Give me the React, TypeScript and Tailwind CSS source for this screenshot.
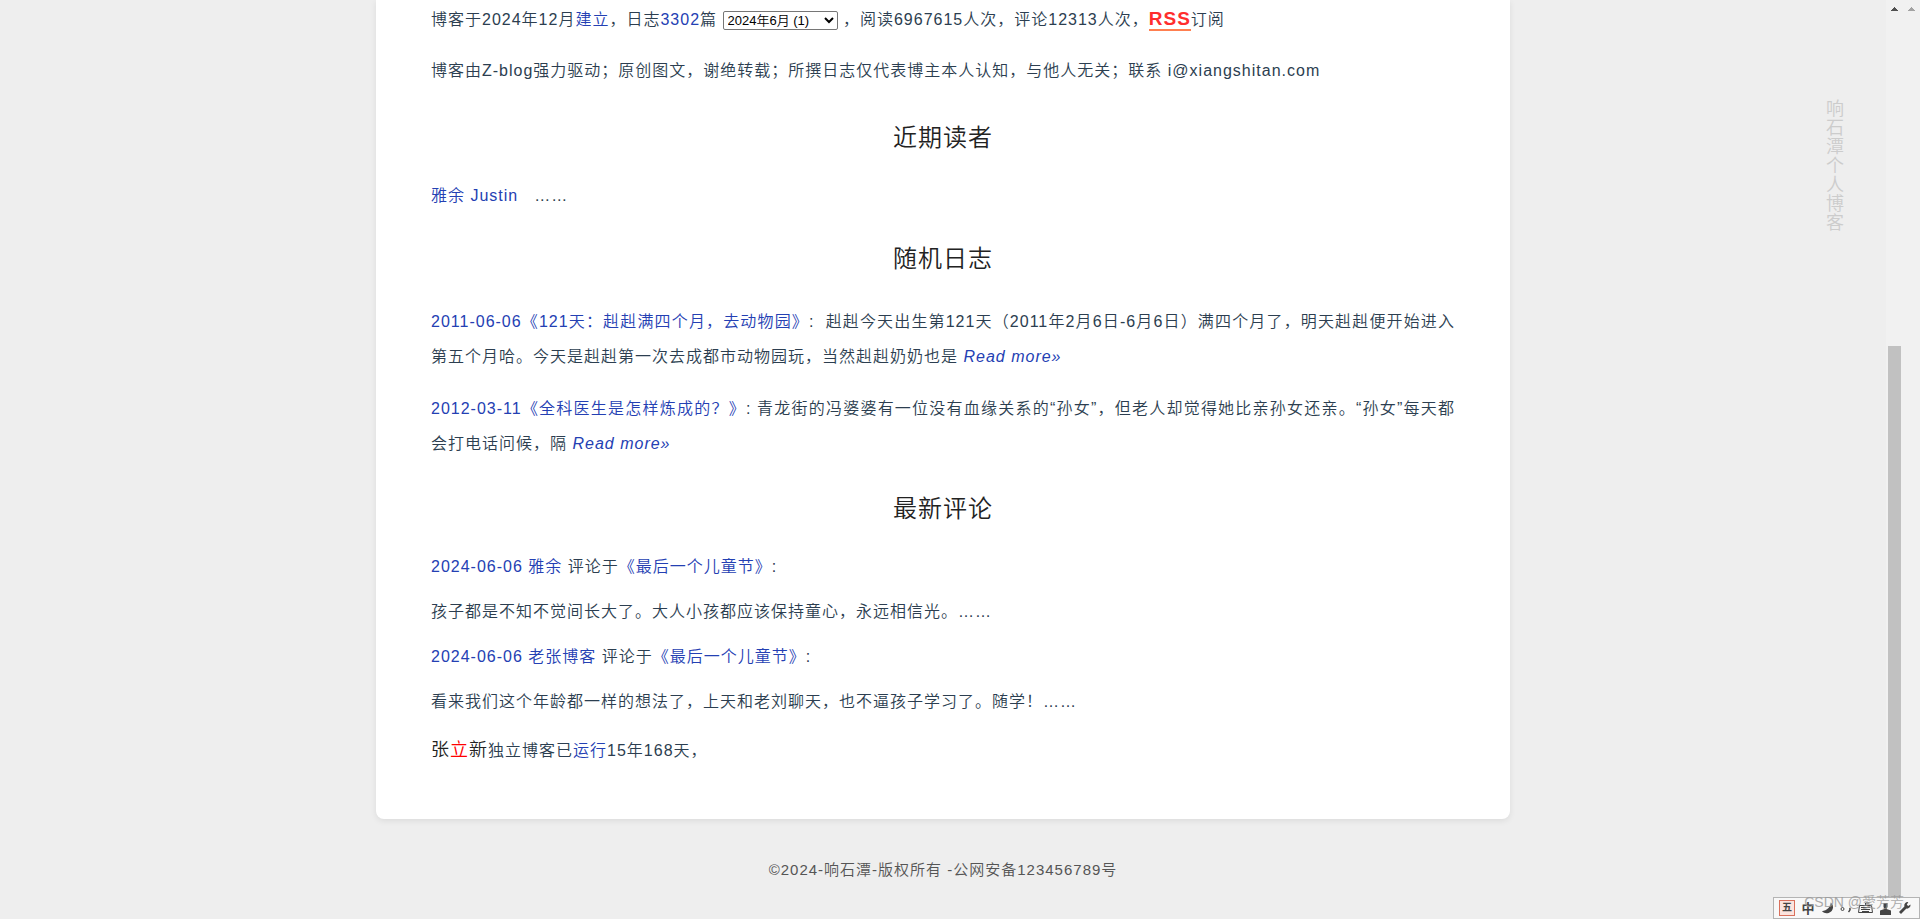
import type { ReactNode } from 'react';

interface Post {
  title: string;
  sep: string;
  excerpt: string;
}

interface Comment {
  date: string;
  author: string;
  article: string;
  text: string;
}

const POSTS: Post[] = [
  {
    title: '2011-06-06《121天：赳赳满四个月，去动物园》',
    sep: ':\u00a0 ',
    excerpt:
      '赳赳今天出生第121天（2011年2月6日-6月6日）满四个月了，明天赳赳便开始进入第五个月哈。今天是赳赳第一次去成都市动物园玩，当然赳赳奶奶也是',
  },
  {
    title: '2012-03-11《全科医生是怎样炼成的？》',
    sep: ': ',
    excerpt:
      '青龙街的冯婆婆有一位没有血缘关系的“孙女”，但老人却觉得她比亲孙女还亲。“孙女”每天都会打电话问候，隔',
  },
];

const COMMENTS: Comment[] = [
  {
    date: '2024-06-06',
    author: '雅余',
    article: '《最后一个儿童节》',
    text: '孩子都是不知不觉间长大了。大人小孩都应该保持童心，永远相信光。……',
  },
  {
    date: '2024-06-06',
    author: '老张博客',
    article: '《最后一个儿童节》',
    text: '看来我们这个年龄都一样的想法了，上天和老刘聊天，也不逼孩子学习了。随学！……',
  },
];

function Link({ children }: { children: ReactNode }) {
  return (
    <a href="#" className="text-[#2440b3]">
      {children}
    </a>
  );
}

function Heading({ children }: { children: ReactNode }) {
  return <h2 className="mt-7 mb-[23px] text-center text-2xl leading-[35px] font-[350] text-[#222]">{children}</h2>;
}

// 滚动条：外层页面不可滚动，箭头为浅色，没有滑块
function ScrollBar({ active }: { active: boolean }) {
  return (
    <div className="flex w-[17px] flex-col items-center bg-[#f1f1f1]">
      <svg width="7" height="4" viewBox="0 0 7 4" className="mt-[7px] shrink-0" shapeRendering="crispEdges">
        <path d="M3 0h1v1h1v1h1v1h1v1H0V3h1V2h1V1h1z" fill={active ? '#505050' : '#a3a3a3'} />
      </svg>
      {active && (
        <>
          <div className="grow-[335]" />
          <div className="w-[13px] grow-[555] bg-[#c1c1c1]" />
          <div className="h-[17px]" />
        </>
      )}
    </div>
  );
}

// 右下角输入法状态栏
function ImeBar() {
  return (
    <div className="absolute right-0 bottom-0 flex h-[22px] w-[147px] items-center gap-[6px] border border-[#b4b4b4] bg-[#f8f8f8] pl-[5px] font-bold text-[#444]">
      <span className="flex size-4 shrink-0 items-center justify-center border border-[#d9705c] bg-[#fbe4de] text-[10px] leading-none">
        五
      </span>
      <span className="w-[14px] shrink-0 text-center text-[13px] leading-none">中</span>
      <svg width="13" height="14" viewBox="0 0 14 14" fill="#444" className="shrink-0">
        <path d="M10.500 1C10.500 6 6.500 9.500 1 10.500A7 7 0 0 0 13 6.500 7 7 0 0 0 10.500 1z" />
      </svg>
      <svg width="12" height="14" viewBox="0 0 12 14" fill="none" stroke="#444" className="shrink-0">
        <circle cx="2.500" cy="8" r="1.500" />
        <path d="M9.500 7q1.500 1.500-1 4" strokeWidth="1.500" />
      </svg>
      <svg width="15" height="12" viewBox="0 0 15 12" fill="none" stroke="#444" className="shrink-0">
        <path d="M1.500 3.500h12l1 7H.5zM3 5.500h9M3 7.500h9M4 9.500h7M7.500 3.500V1h4" />
      </svg>
      <svg width="13" height="13" viewBox="0 0 13 13" fill="#444" className="shrink-0">
        <path d="M4.500 1h4v4l-1 2 4.500 1.500V13H1V8.500L5.500 7l-1-2z" />
      </svg>
      <svg width="14" height="14" viewBox="0 0 14 14" fill="#444" className="shrink-0">
        <path d="M12.500 3.500l-2.300 1.500-1.400-1.200L10.300 1A3.600 3.600 0 0 0 6.400 5.600L1 11l2 2 5.400-5.400a3.600 3.600 0 0 0 4.100-4.100z" />
      </svg>
    </div>
  );
}

export default function App() {
  return (
    <div className="relative flex min-h-screen bg-[#eee] font-['Liberation_Sans','Noto_Sans_CJK_SC',sans-serif] font-[350]">
      <div className="flex-1 tracking-[1px]">
        <main className="mx-auto w-full max-w-[1134px] rounded-b-[8px] bg-white px-[55px] pt-[2px] pb-[51px] text-base leading-[35px] text-[#2c3e50] shadow-[0_2px_6px_rgba(0,0,0,0.08)]">
          <p className="mb-4">
            博客于2024年12月<Link>建立</Link>，日志<Link>3302</Link>篇{' '}
            <select
              aria-label="日志归档"
              className="h-[19px] w-[115px] rounded-[2px] border border-[#767676] bg-white text-[13px] leading-4 tracking-normal text-black"
            >
              <option>2024年6月 (1)</option>
            </select>{' '}
            ，阅读6967615人次，评论12313人次，
            <a href="#" className="border-b-2 border-[#ff7f50] text-[19px] leading-none font-bold text-[#ff2d2d]">
              RSS
            </a>
            订阅
          </p>
          <p className="mb-8">
            博客由Z-blog强力驱动；原创图文，谢绝转载；所撰日志仅代表博主本人认知，与他人无关；联系 i@xiangshitan.com
          </p>

          <Heading>近期读者</Heading>
          <p>
            <Link>雅余 Justin</Link>
            <span className="ml-4">……</span>
          </p>

          <Heading>随机日志</Heading>
          <div className="mt-7 mb-[30px] flex flex-col gap-[17px]">
            {POSTS.map((p) => (
              <p key={p.title} className="text-justify">
                <Link>{p.title}</Link>
                {p.sep}
                {p.excerpt}{' '}
                <em>
                  <Link>Read more»</Link>
                </em>
              </p>
            ))}
          </div>

          <Heading>最新评论</Heading>
          <ul className="mb-[14px] flex flex-col gap-[10px]">
            {COMMENTS.map((c) => (
              <li key={c.author} className="flex flex-col gap-[10px]">
                <p>
                  <Link>
                    {c.date} {c.author}
                  </Link>{' '}
                  评论于<Link>{c.article}</Link>:
                </p>
                <p>{c.text}</p>
              </li>
            ))}
          </ul>

          <p>
            <span className="text-lg leading-none text-[#222]">
              张<span className="text-[#f00]">立</span>新
            </span>
            独立博客已<Link>运行</Link>15年168天，
          </p>
        </main>
        <footer className="pt-[39px] pb-8 text-center text-[15px] leading-6 text-[#555]">
          ©2024-响石潭-版权所有 -公网安备123456789号
        </footer>
      </div>

      <div className="absolute top-[100px] right-[76px] w-[18px] text-lg leading-[19px] text-[#ccc]">
        响石潭个人博客
      </div>

      <ScrollBar active />
      <ScrollBar active={false} />

      <ImeBar />
      <div className="absolute right-4 bottom-[7px] text-sm leading-5 text-[#999] opacity-80">CSDN @愛芳芳</div>
    </div>
  );
}
